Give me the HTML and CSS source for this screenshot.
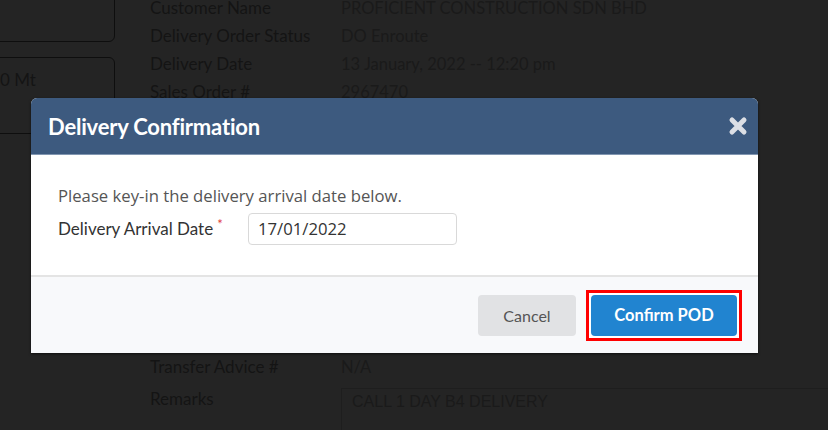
FILE: index.html
```html
<!DOCTYPE html>
<html>
<head>
<meta charset="utf-8">
<link rel="stylesheet" href="styles.css">
</head>
<body>
<div class="page">
  <div class="left-col">
    <div class="box box-top"></div>
    <div class="box box-qty"><span class="qty">0 Mt</span></div>
  </div>
  <div class="details">
    <div class="lbl">Customer Name</div><div class="val">PROFICIENT CONSTRUCTION SDN BHD</div>
    <div class="lbl">Delivery Order Status</div><div class="val">DO Enroute</div>
    <div class="lbl">Delivery Date</div><div class="val">13 January, 2022 -- 12:20 pm</div>
    <div class="lbl">Sales Order #</div><div class="val">2967470</div>
    <div class="spacer"></div>
    <div class="lbl">Transfer Advice #</div><div class="val">N/A</div>
    <div class="lbl lbl-remarks">Remarks</div><div class="remarks-box">CALL 1 DAY B4 DELIVERY</div>
  </div>
</div>

<div class="modal">
  <div class="modal-header">
    <h2 class="modal-title">Delivery Confirmation</h2>
    <svg class="close-icon" width="20" height="20" viewBox="0 0 20 20" aria-hidden="true">
      <path d="M4 4 L16 16 M16 4 L4 16" stroke="#dcdfe5" stroke-width="5" stroke-linecap="round" fill="none"/>
    </svg>
  </div>
  <div class="modal-body">
    <p class="intro">Please key-in the delivery arrival date below.</p>
    <div class="field">
      <label class="field-label">Delivery Arrival Date<span class="req">*</span></label>
      <div class="input">17/01/2022</div>
    </div>
  </div>
  <div class="modal-footer">
    <button class="btn btn-cancel">Cancel</button>
    <div class="highlight"><button class="btn btn-confirm">Confirm POD</button></div>
  </div>
</div>
</body>
</html>
```

FILE: styles.css
```css
html, body {
  margin: 0;
  padding: 0;
}
body {
  width: 828px;
  height: 430px;
  overflow: hidden;
  background: #242424;
  font-family: "Lato", "Open Sans", sans-serif;
  position: relative;
}
.page {
  display: flex;
  height: 430px;
}
.left-col {
  width: 116px;
  flex: none;
  margin-left: -20px;
}
.box {
  border: 1px solid #0e0e0e;
  border-radius: 6px;
  box-sizing: border-box;
}
.box-top {
  height: 52px;
  margin-top: -10px;
  width: 135px;
}
.box-qty {
  height: 77px;
  margin-top: 15px;
  width: 135px;
  padding-top: 11px;
  padding-left: 19px;
}
.qty {
  font-size: 17px;
  color: #141414;
}
.details {
  margin-left: 54px;
  margin-top: -6px;
  display: grid;
  grid-template-columns: 191px 1fr;
  grid-template-rows: 28px 28px 28px 28px 247px 28px 60px;
  align-content: start;
  font-size: 17px;
  flex: 1;
}
.lbl {
  color: #141414;
  line-height: 28px;
  white-space: nowrap;
}
.val {
  color: #1a1a1a;
  font-size: 16.5px;
  line-height: 28px;
  white-space: nowrap;
}
.spacer {
  grid-column: 1 / 3;
}
.lbl-remarks {
  padding-top: 4px;
}
.remarks-box {
  margin-top: 7px;
  border: 1px solid #1e1e1e;
  border-right: none;
  box-sizing: border-box;
  padding: 4px 10px;
  font-family: "Liberation Sans", Arial, sans-serif;
  font-size: 16px;
  color: #1a1a1a;
  height: 60px;
}

.modal {
  position: absolute;
  left: 31px;
  top: 98px;
  width: 727px;
  background: #fff;
  border-radius: 6px 6px 0 0;
  box-shadow: 0 1px 3px rgba(0,0,0,0.6);
}
.modal-header {
  height: 56px;
  background: #3d5a7f;
  border-bottom: 1px solid #8196b1;
  border-radius: 6px 6px 0 0;
  display: flex;
  align-items: center;
  justify-content: space-between;
  padding: 0 10px 0 17px;
}
.modal-title {
  margin: 0;
  color: #fff;
  font-family: "Lato", sans-serif;
  font-weight: 700;
  font-size: 22px;
  letter-spacing: -0.2px;
}
.close-icon {
  display: block;
}
.modal-body {
  height: 122px;
  box-sizing: border-box;
  padding: 29px 27px 0;
  border-bottom: 2px solid #e4e4e4;
}
.intro {
  margin: 0 0 5px;
  font-family: "Open Sans", sans-serif;
  font-size: 16.7px;
  color: #555;
  line-height: 24px;
}
.field {
  display: flex;
  align-items: center;
}
.field-label {
  width: 190px;
  font-family: "Lato", sans-serif;
  font-size: 17px;
  color: #333;
  position: relative;
  top: -2px;
}
.req {
  color: #e13b3b;
  font-size: 13px;
  vertical-align: 6px;
  margin-left: 4px;
}
.input {
  width: 209px;
  height: 32px;
  box-sizing: border-box;
  border: 1px solid #d9d9d9;
  border-radius: 4px;
  padding: 0 9px;
  font-family: "Open Sans", sans-serif;
  font-size: 16.7px;
  color: #333;
  line-height: 30px;
}
.modal-footer {
  height: 76px;
  background: #f8f9fb;
  display: flex;
  align-items: center;
  justify-content: flex-end;
  padding-right: 16px;
  gap: 10px;
}
.btn {
  border: none;
  height: 41px;
  border-radius: 4px;
  font-family: "Lato", sans-serif;
  font-size: 16px;
  cursor: pointer;
}
.btn-cancel {
  width: 98px;
  background: #e1e2e4;
  color: #555;
}
.highlight {
  border: 3px solid #ff0000;
  padding: 2px;
  background: #fff;
  display: flex;
}
.btn-confirm {
  width: 146px;
  background: #2184d0;
  color: #fff;
  font-size: 16.5px;
  font-weight: 700;
}
```
